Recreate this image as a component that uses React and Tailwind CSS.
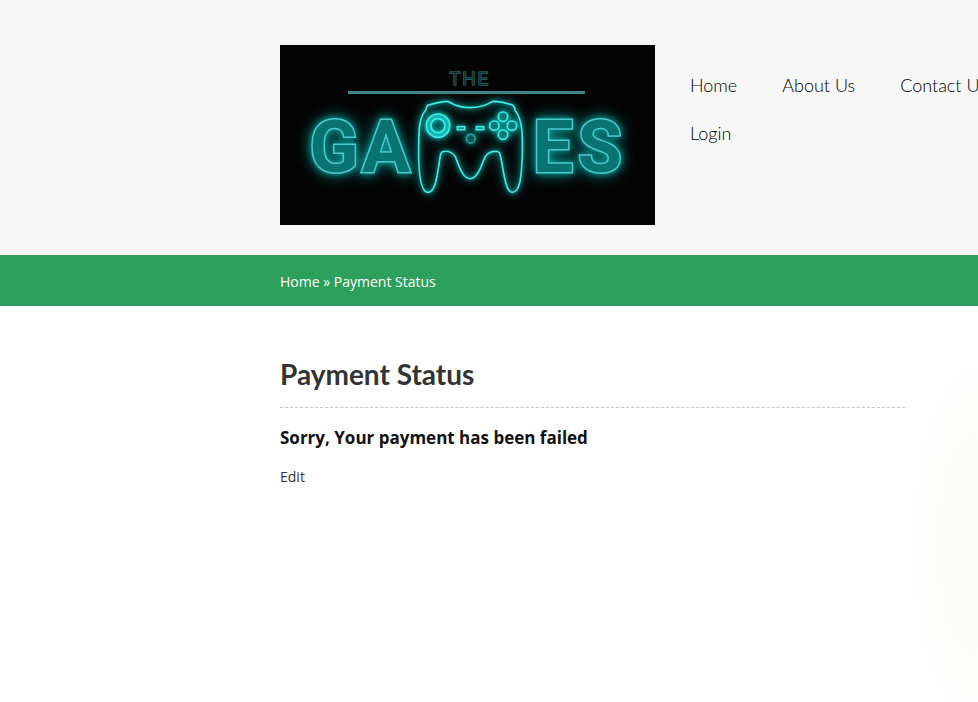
import React from "react";

const navItems = ["Home", "About Us", "Contact Us", "Login"];

const controllerPath =
  "M112 64 C92 65 74 69 53 76 Q48 82 48 90 C25 112 26 160 26 230 C27 290 33 337 54 337 C75 337 80 300 89 240 C92 222 92 214 104 214 C118 213 127 216 136 230 C148 260 158 296 181 296 C204 296 214 255 226 230 C235 214 250 214 258 214 C272 214 270 225 275 245 C283 295 290 337 307 337 C330 337 335 290 337 220 C338 160 337 115 314 90 Q316 82 309 76 C290 69 270 64 250 64 C238 66 232 82 181 83 C130 82 125 66 112 64 Z";

function Controller() {
  return (
    <g transform="translate(130 35) scale(0.3333)" fill="none">
      <path d={controllerPath} />
      <circle cx="84" cy="137" r="28" strokeWidth="14" stroke="#12b5b2" />
      <circle cx="84" cy="137" r="35" />
      <circle cx="84" cy="137" r="21" />
      <rect x="142" y="140" width="22" height="9" />
      <rect x="199" y="140" width="22" height="9" />
      <circle cx="182" cy="176" r="13" stroke="#2d9f9f" />
      <g fill="#087b79">
        <circle cx="279" cy="110" r="14" />
        <circle cx="253" cy="137" r="14" />
        <circle cx="306" cy="137" r="14" />
        <circle cx="279" cy="164" r="14" />
      </g>
    </g>
  );
}

function Logo() {
  return (
    <svg viewBox="0 0 375 180" className="block h-[180px] w-[375px]" role="img" aria-label="The Games">
      <rect width="375" height="180" fill="#040404" />
      <rect x="68" y="46" width="237" height="3" fill="#3c8787" />
      <g
        className="[filter:drop-shadow(0_0_2px_#0bb5b0)_drop-shadow(0_0_5px_#089c98)]"
        stroke="#3ceee8"
        strokeWidth="5"
      >
        <Controller />
      </g>
      <g
        className="[filter:drop-shadow(0_0_3px_#079a96)_drop-shadow(0_0_7px_#067b78)]"
        fontFamily="Roboto, 'Liberation Sans', sans-serif"
        fontWeight="700"
        fontSize="72"
        textAnchor="middle"
        fill="#087370"
        stroke="#4cc9cf"
        strokeWidth="3"
        paintOrder="stroke"
      >
        <text x="54 106" y="127">GA</text>
        <text x="273 320" y="127">ES</text>
      </g>
      <text
        x="175 189 203"
        y="40"
        textAnchor="middle"
        fontFamily="Roboto, 'Liberation Sans', sans-serif"
        fontSize="19"
        fill="#0d3335"
        stroke="#35868a"
        strokeWidth="1"
        paintOrder="stroke"
      >
        THE
      </text>
    </svg>
  );
}

export default function App() {
  return (
    <div className="flex min-h-screen flex-col overflow-x-hidden bg-white font-['Open_Sans',sans-serif] text-[14px] text-[#333333]">
      <header className="flex bg-[#f7f7f7] pt-[45px] pb-[30px] pl-[280px]">
        <a href="#home" className="shrink-0">
          <Logo />
        </a>
        <nav className="ml-[35px] min-w-[320px] flex-1 pt-4 font-[Lato,sans-serif] text-[18px] leading-[48px] font-light text-black">
          <ul className="flex max-w-[350px] flex-wrap gap-x-[45px]">
            {navItems.map((item) => (
              <li key={item}>
                <a href="#nav" className="whitespace-nowrap">{item}</a>
              </li>
            ))}
          </ul>
        </nav>
      </header>

      <nav aria-label="Breadcrumb" className="bg-[#2ca05a] pt-[17px] pb-[15px] pl-[280px] leading-[19px] text-white">
        <a href="#home">Home</a> » <span>Payment Status</span>
      </nav>

      <main className="flex-1 bg-[radial-gradient(70px_190px_at_100%_60%,#fafaf6,#fdfdfb_60%,#ffffff)] pt-12 pl-[280px]">
        <div className="max-w-[625px]">
          <h1 className="border-b border-dashed border-[#c4c4c4] pb-[13px] font-[Lato,sans-serif] text-[28px] leading-10 font-bold">
            Payment Status
          </h1>
          <h2 className="mt-[18px] text-[17px] leading-6 font-bold text-[#111111]">
            Sorry, Your payment has been failed
          </h2>
          <a href="#edit" className="mt-[15px] inline-block leading-6">
            Edit
          </a>
        </div>
      </main>
    </div>
  );
}
